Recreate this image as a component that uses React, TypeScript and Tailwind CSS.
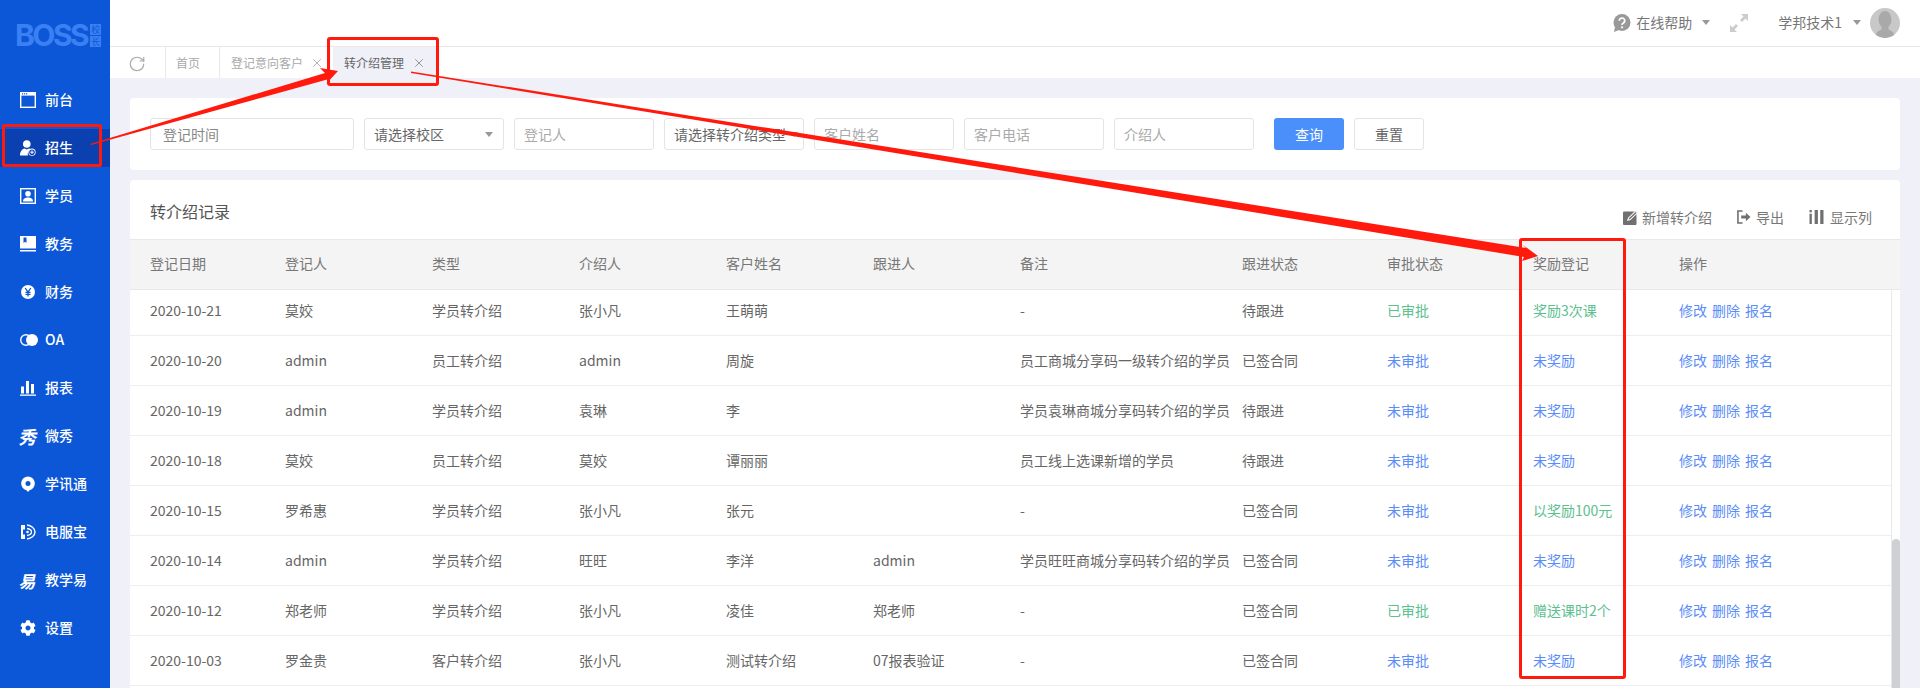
import { RotateCw, X } from "lucide-react";
import { FaCog } from "react-icons/fa";
import type { ReactNode } from "react";

const BLUE = "#0b57d8";

const navItems: { label: string; icon: ReactNode; active?: boolean }[] = [
  {
    label: "前台",
    icon: (
      <svg viewBox="0 0 16 16" className="h-4 w-4" fill="none">
        <rect x="0.7" y="0.7" width="14.6" height="14.6" stroke="#fff" strokeWidth="1.4" />
        <rect x="0" y="0" width="16" height="3.6" fill="#fff" />
        <rect x="2" y="1.2" width="1.2" height="1.2" fill={BLUE} />
        <rect x="4" y="1.2" width="1.2" height="1.2" fill={BLUE} />
        <rect x="6" y="1.2" width="1.2" height="1.2" fill={BLUE} />
      </svg>
    ),
  },
  {
    label: "招生",
    active: true,
    icon: (
      <svg viewBox="0 0 16 16" className="h-4 w-4">
        <circle cx="6.8" cy="4" r="3.8" fill="#fff" />
        <path d="M0 15.5c0-4 2-6.5 4.5-7l2.300 1 2.300-1c1 .2 2 .8 2.600 1.500A4 4 0 0 0 8 15.500z" fill="#fff" />
        <circle cx="12" cy="12.200" r="3.600" fill="#fff" />
        <circle cx="12" cy="12.200" r="2.800" fill="#0a40b0" />
        <path d="M12 10.400v3.600M10.200 12.200h3.600" stroke="#fff" strokeWidth="1" />
      </svg>
    ),
  },
  {
    label: "学员",
    icon: (
      <svg viewBox="0 0 16 16" className="h-4 w-4">
        <rect x="0.7" y="0.7" width="14.6" height="14.6" fill="none" stroke="#fff" strokeWidth="1.400" />
        <circle cx="8" cy="5.800" r="2.800" fill="#fff" />
        <path d="M3 13.500c0-3 2.200-4 5-4s5 1 5 4z" fill="#fff" />
      </svg>
    ),
  },
  {
    label: "教务",
    icon: (
      <svg viewBox="0 0 16 16" className="h-4 w-4">
        <path d="M0 0h16v12.500H0z" fill="#fff" />
        <path d="M0 14h16v1.500H0z" fill="#fff" />
        <path d="M3.500 1.500h3v5.500L5 5.800 3.500 7z" fill={BLUE} />
      </svg>
    ),
  },
  {
    label: "财务",
    icon: (
      <svg viewBox="0 0 16 16" className="h-4 w-4">
        <circle cx="8" cy="8" r="7" fill="#fff" />
        <path d="M5.200 4l2.800 4 2.800-4M8 8v4.500M5.500 8.300h5M5.500 10.300h5" fill="none" stroke={BLUE} strokeWidth="1.300" />
      </svg>
    ),
  },
  {
    label: "OA",
    icon: (
      <svg viewBox="0 0 18 12" className="h-3 w-[18px]">
        <circle cx="6" cy="6" r="5.300" fill="none" stroke="#fff" strokeWidth="1.400" />
        <circle cx="12" cy="6" r="6" fill="#fff" />
      </svg>
    ),
  },
  {
    label: "报表",
    icon: (
      <svg viewBox="0 0 16 16" className="h-4 w-4" fill="#fff">
        <rect x="1" y="6.500" width="3" height="7" />
        <rect x="6" y="1" width="3" height="12.500" />
        <rect x="11" y="4" width="3" height="9.500" />
        <rect x="0" y="14.500" width="16" height="1.300" />
      </svg>
    ),
  },
  {
    label: "微秀",
    icon: <span className="inline-block w-[18px] -skew-x-12 text-[18px] font-bold leading-none">秀</span>,
  },
  {
    label: "学讯通",
    icon: (
      <svg viewBox="0 0 16 16" className="h-4 w-4">
        <path d="M8 .5a7 7 0 0 1 1.500 13.800L8 16l-1.500-1.700A7 7 0 0 1 8 .5z" fill="#fff" />
        <circle cx="8" cy="7.500" r="2.500" fill={BLUE} />
      </svg>
    ),
  },
  {
    label: "电服宝",
    icon: (
      <svg viewBox="0 0 16 16" className="h-4 w-4" fill="none">
        <path d="M1 1h4v4.500H3v5h2V15H1z" fill="#fff" />
        <path d="M7 1c4 .5 8 3 8 7s-4 6.500-8 7" stroke="#fff" strokeWidth="1.400" />
        <path d="M7 4.500c2 .3 4.500 1.500 4.500 3.500S9 11.200 7 11.500" stroke="#fff" strokeWidth="1.300" />
        <circle cx="7.500" cy="8" r="1.300" fill="#fff" />
      </svg>
    ),
  },
  {
    label: "教学易",
    icon: <span className="inline-block w-[17px] -skew-x-12 text-[17px] font-bold leading-none">易</span>,
  },
  { label: "设置", icon: <FaCog className="h-4 w-4" /> },
];

type Row = {
  date: string;
  by: string;
  type: string;
  ref: string;
  name: string;
  owner: string;
  note: string;
  follow: string;
  approved: boolean;
  reward: string;
};

const rows: Row[] = [
  { date: "2020-10-21", by: "莫姣", type: "学员转介绍", ref: "张小凡", name: "王萌萌", owner: "", note: "-", follow: "待跟进", approved: true, reward: "奖励3次课" },
  { date: "2020-10-20", by: "admin", type: "员工转介绍", ref: "admin", name: "周旋", owner: "", note: "员工商城分享码一级转介绍的学员", follow: "已签合同", approved: false, reward: "未奖励" },
  { date: "2020-10-19", by: "admin", type: "学员转介绍", ref: "袁琳", name: "李", owner: "", note: "学员袁琳商城分享码转介绍的学员", follow: "待跟进", approved: false, reward: "未奖励" },
  { date: "2020-10-18", by: "莫姣", type: "员工转介绍", ref: "莫姣", name: "谭丽丽", owner: "", note: "员工线上选课新增的学员", follow: "待跟进", approved: false, reward: "未奖励" },
  { date: "2020-10-15", by: "罗希惠", type: "学员转介绍", ref: "张小凡", name: "张元", owner: "", note: "-", follow: "已签合同", approved: false, reward: "以奖励100元" },
  { date: "2020-10-14", by: "admin", type: "学员转介绍", ref: "旺旺", name: "李洋", owner: "admin", note: "学员旺旺商城分享码转介绍的学员", follow: "已签合同", approved: false, reward: "未奖励" },
  { date: "2020-10-12", by: "郑老师", type: "学员转介绍", ref: "张小凡", name: "凌佳", owner: "郑老师", note: "-", follow: "已签合同", approved: true, reward: "赠送课时2个" },
  { date: "2020-10-03", by: "罗金贵", type: "客户转介绍", ref: "张小凡", name: "测试转介绍", owner: "07报表验证", note: "-", follow: "已签合同", approved: false, reward: "未奖励" },
];

const headers = ["登记日期", "登记人", "类型", "介绍人", "客户姓名", "跟进人", "备注", "跟进状态", "审批状态", "奖励登记", "操作"];
const gridCols = "grid grid-cols-[135px_147px_147px_147px_147px_147px_222px_145px_146px_146px_1fr] pl-[20px]";

function Caret() {
  return <span className="inline-block h-0 w-0 border-x-[4.5px] border-t-[5px] border-x-transparent border-t-[#999]" />;
}

function TextInput({ placeholder, wide }: { placeholder: string; wide?: boolean }) {
  return (
    <input
      readOnly
      placeholder={placeholder}
      className={`h-[32px] rounded-[3px] border border-[#e4e4e4] px-[9px] text-sm outline-none ${
        wide ? "w-[204px] pl-[12px] placeholder:text-[#888]" : "w-[140px] placeholder:text-[#aaa]"
      }`}
    />
  );
}

function SelectBox({ label }: { label: string }) {
  return (
    <div className="flex h-[32px] w-[140px] items-center justify-between overflow-hidden whitespace-nowrap rounded-[3px] border border-[#e4e4e4] pl-[9px] pr-[10px] text-sm text-[#666]">
      <span>{label}</span>
      <span className="ml-1 flex">
        <Caret />
      </span>
    </div>
  );
}

export default function App() {
  return (
    <div className="relative flex h-[688px] w-full overflow-hidden bg-[#eff0f8] font-['Noto_Sans_CJK_SC','Noto_Sans',sans-serif] text-sm text-[#666]">
      {/* Sidebar */}
      <aside className="flex w-[110px] shrink-0 flex-col bg-[#0b57d8] text-white">
        <div className="flex h-[81px] items-start pl-[15px] pt-[20px]">
          <span className="font-['Inter',sans-serif] text-[30px] font-bold leading-[30px] tracking-[-2.5px] text-[#3b80f2]">BOSS</span>
          <div className="ml-[3px] mt-[4px] flex flex-col gap-[1px]">
            <span className="flex h-[11px] w-[11px] items-center justify-center bg-[#3b80f2] text-[9px] leading-none text-[#0b57d8]">校</span>
            <span className="flex h-[11px] w-[11px] items-center justify-center bg-[#3b80f2] text-[9px] leading-none text-[#0b57d8]">长</span>
          </div>
        </div>
        <nav className="flex flex-col gap-[10px]">
          {navItems.map((item) => (
            <div key={item.label} className={`flex h-[38px] items-center pl-[20px] font-medium ${item.active ? "bg-[#0a40b0]" : ""}`}>
              <span className="flex w-[25px] shrink-0 items-center">{item.icon}</span>
              <span className="pb-[2px]">{item.label}</span>
            </div>
          ))}
        </nav>
      </aside>

      <main className="flex min-w-0 flex-1 flex-col">
        {/* Top bar */}
        <header className="flex h-[47px] shrink-0 items-center justify-end border-b border-[#e8e8e8] bg-white pb-[1px] pr-[20px]">
          <svg viewBox="0 0 18 18" className="mr-[5px] h-[18px] w-[18px]">
            <circle cx="9" cy="8.500" r="8.500" fill="#999" />
            <path d="M2 13l-1 5 5-2z" fill="#999" />
            <path d="M6.300 6.800a2.700 2.700 0 1 1 4 2.300c-.9.500-1.300 1-1.300 1.900" fill="none" stroke="#fff" strokeWidth="1.700" />
            <circle cx="9" cy="13.300" r="1.100" fill="#fff" />
          </svg>
          <span className="pb-[1px] text-sm text-[#777]">在线帮助</span>
          <span className="ml-[10px] flex">
            <Caret />
          </span>
          <svg viewBox="0 0 18 18" className="ml-[20px] h-[18px] w-[18px]" fill="#ccc">
            <path d="M11 0h7v7l-2.500-2.500-3.500 3.500-2-2 3.500-3.500z" />
            <path d="M7 18H0v-7l2.500 2.500L6 10l2 2-3.500 3.500z" />
          </svg>
          <span className="ml-[30px] pb-[1px] text-sm text-[#777]">学邦技术1</span>
          <span className="ml-[11px] flex">
            <Caret />
          </span>
          <div className="ml-[9px] h-[30px] w-[30px] overflow-hidden rounded-full bg-[#c8c8c8]">
            <svg viewBox="0 0 30 30" className="h-[30px] w-[30px]" fill="#a9a9a9">
              <ellipse cx="15" cy="11.500" rx="6.500" ry="8.500" />
              <path d="M11.500 18h7v3.500c3 1.200 5.500 2 6.500 8.500H5c1-6.500 3.500-7.300 6.500-8.500z" />
            </svg>
          </div>
        </header>

        {/* Tabs */}
        <div className="flex h-[31px] shrink-0 bg-white text-xs text-[#aaa]">
          <div className="flex w-[56px] items-center justify-center border-r border-[#e8e8e8]">
            <RotateCw className="mb-[-3px] ml-[-1px] h-[18px] w-[18px] text-[#aaa]" strokeWidth={1.6} />
          </div>
          <div className="flex w-[54px] items-center border-r border-[#e8e8e8] pl-[10px]">首页</div>
          <div className="flex w-[113px] items-center pl-[11px]">
            <span>登记意向客户</span>
            <X className="ml-[7px] h-[14px] w-[14px] text-[#aaa]" strokeWidth={1.5} />
          </div>
          <div className="flex w-[104px] items-center bg-[#eff0f8] pl-[11px] text-[#666]">
            <span>转介绍管理</span>
            <X className="ml-[8px] h-[14px] w-[14px] text-[#888]" strokeWidth={1.5} />
          </div>
        </div>

        <div className="flex min-h-0 flex-1 flex-col gap-[10px] px-[20px] pt-[20px]">
          {/* Filters */}
          <section className="flex h-[72px] shrink-0 items-center gap-[10px] rounded-[4px] bg-white pl-[20px]">
            <TextInput placeholder="登记时间" wide />
            <SelectBox label="请选择校区" />
            <TextInput placeholder="登记人" />
            <SelectBox label="请选择转介绍类型" />
            <TextInput placeholder="客户姓名" />
            <TextInput placeholder="客户电话" />
            <TextInput placeholder="介绍人" />
            <button className="ml-[10px] h-[32px] w-[70px] rounded-[3px] bg-[#4a8ffa] text-sm text-white">查询</button>
            <button className="h-[32px] w-[70px] rounded-[3px] border border-[#e4e4e4] bg-white text-sm text-[#666]">重置</button>
          </section>

          {/* Table card */}
          <section className="flex min-h-0 flex-1 flex-col overflow-hidden rounded-t-[4px] bg-white">
            <div className="flex h-[59px] shrink-0 items-start justify-between pl-[20px] pr-[28px]">
              <h2 className="mt-[20px] text-base font-normal leading-[22px] text-[#555]">转介绍记录</h2>
              <div className="mt-[26px] flex items-center leading-[22px] text-[#777]">
                <svg viewBox="0 0 15 15" className="mr-[4px] h-[15px] w-[15px]">
                  <rect x="0" y="1.500" width="13.500" height="13.500" rx="1" fill="#707070" />
                  <path d="M4 11l1-3.200L12 1l2.500 2.300-7 6.700z" fill="#fff" />
                  <path d="M5.500 9.500l.6-1.500L12.500 2l1 1-6.400 6z" fill="#707070" />
                </svg>
                <span>新增转介绍</span>
                <svg viewBox="0 0 15 15" className="ml-[25px] mr-[5px] h-[14px] w-[14px]" fill="none">
                  <path d="M6 1H1v13h5" stroke="#707070" strokeWidth="1.700" />
                  <path d="M4.500 6h5V3l5 4.500-5 4.500V9h-5z" fill="#707070" />
                </svg>
                <span>导出</span>
                <svg viewBox="0 0 15 15" className="ml-[25px] mr-[6px] h-[14px] w-[15px]" fill="#707070">
                  <rect x="0" y="0" width="2.500" height="2.500" />
                  <rect x="0" y="4" width="2.500" height="11" />
                  <rect x="5.500" y="0" width="3.500" height="15" />
                  <rect x="11.500" y="0" width="3.500" height="15" />
                </svg>
                <span>显示列</span>
              </div>
            </div>

            <div className={`${gridCols} h-[51px] shrink-0 items-center border-y border-[#e8e8e8] bg-[#f4f4f4] pb-[3px] text-[#777]`}>
              {headers.map((h) => (
                <span key={h}>{h}</span>
              ))}
            </div>

            <div className="flex min-h-0 flex-1">
              <div className="min-w-0 flex-1">
                {rows.map((r, i) => (
                  <div
                    key={r.date}
                    className={`${gridCols} items-center whitespace-nowrap border-b border-[#eee] ${i === 0 ? "h-[46px] pb-[6px]" : "h-[50px] pb-[2px]"}`}
                  >
                    <span>{r.date}</span>
                    <span>{r.by}</span>
                    <span>{r.type}</span>
                    <span>{r.ref}</span>
                    <span>{r.name}</span>
                    <span>{r.owner}</span>
                    <span>{r.note}</span>
                    <span>{r.follow}</span>
                    <span className={r.approved ? "text-[#5cc08f]" : "text-[#5a8df8]"}>{r.approved ? "已审批" : "未审批"}</span>
                    <span className={r.reward === "未奖励" ? "text-[#5a8df8]" : "text-[#5cc08f]"}>{r.reward}</span>
                    <span className="flex gap-[5px] text-[#5a8df8]">
                      <span>修改</span>
                      <span>删除</span>
                      <span>报名</span>
                    </span>
                  </div>
                ))}
              </div>
              <div className="w-[9px] shrink-0 border-l border-[#e8e8e8] pt-[249px]">
                <div className="h-[200px] rounded-t-[4px] bg-[#cfd0d3]" />
              </div>
            </div>
          </section>
        </div>
      </main>

      {/* Annotations drawn over the screenshot */}
      <div className="pointer-events-none absolute left-[2px] top-[124px] h-[43px] w-[100px] rounded-[2px] border-[3px] border-[#ff1a0d]" />
      <div className="pointer-events-none absolute left-[327px] top-[37px] h-[49px] w-[112px] rounded-[3px] border-[3px] border-[#ff1a0d]" />
      <div className="pointer-events-none absolute left-[1519px] top-[238px] h-[441px] w-[107px] rounded-[3px] border-[3px] border-[#ff1a0d]" />
      <svg className="pointer-events-none absolute left-0 top-0 h-[688px] w-[1920px]" viewBox="0 0 1920 688" fill="#ff1a0d">
        <polygon points="90,144 325,73 320,68 338,71 326,84 329,79 91,145" />
        <polygon points="411,71.500 1526,248 1523,245 1538,256 1522,261 1524,257 411,73" />
      </svg>
    </div>
  );
}
